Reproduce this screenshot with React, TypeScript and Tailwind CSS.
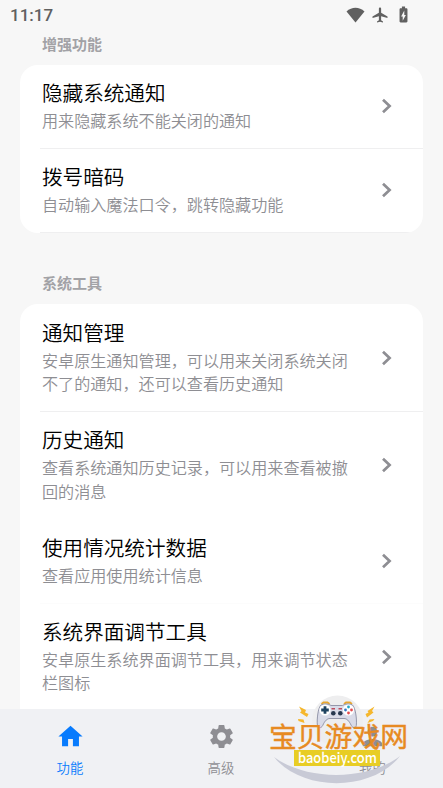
import { MdAirplanemodeActive, MdBatteryChargingFull, MdHome, MdSettings, MdPerson } from "react-icons/md";
import clsx from "clsx";

type Item = { title: string; desc: string; divider?: "normal" | "faint" };

const enhanced: Item[] = [
  { title: "隐藏系统通知", desc: "用来隐藏系统不能关闭的通知", divider: "normal" },
  { title: "拨号暗码", desc: "自动输入魔法口令，跳转隐藏功能", divider: "normal" },
];

const systemTools: Item[] = [
  { title: "通知管理", desc: "安卓原生通知管理，可以用来关闭系统关闭不了的通知，还可以查看历史通知", divider: "normal" },
  { title: "历史通知", desc: "查看系统通知历史记录，可以用来查看被撤回的消息" },
  { title: "使用情况统计数据", desc: "查看应用使用统计信息", divider: "faint" },
  { title: "系统界面调节工具", desc: "安卓原生系统界面调节工具，用来调节状态栏图标" },
];

function StatusBar() {
  return (
    <header className="flex h-[30px] shrink-0 items-center justify-between pl-[10px] pr-[30px] text-[#606060]">
      <span className="font-[Roboto] text-[17px] font-medium leading-[30px]">11:17</span>
      <div className="flex items-center pb-px">
        <svg className="h-[16px] w-[19px]" viewBox="0 0 19 16" fill="currentColor">
          <path d="M.5 4.6C5.8-.4 13.2-.4 18.500 4.600L9.500 15.500Z" />
        </svg>
        <MdAirplanemodeActive className="ml-[6px] size-[18px]" />
        <MdBatteryChargingFull className="ml-[5px] size-[19px]" />
      </div>
    </header>
  );
}

function Chevron() {
  return (
    <svg className="mr-[31px] mt-[2.8px] h-[16px] w-[11px] shrink-0" viewBox="0 0 11 16" fill="none" stroke="#8e8e93" strokeWidth="2.7">
      <path d="M2 1.700 8.600 8 2 14.300" />
    </svg>
  );
}

function Row({ title, desc, divider }: Item) {
  return (
    <div className="pl-5">
      <div
        className={clsx(
          "flex items-center justify-between border-b pb-[15.4px] pl-[2px] pt-3",
          divider === "normal" && "border-[#efeff0]",
          divider === "faint" && "border-[#fcfcfc]",
          !divider && "border-transparent"
        )}
      >
        <div className="w-[312px]">
          <h3 className="mb-[1.2px] text-[20.6px] font-[350] leading-[31px] text-black">{title}</h3>
          <p className="text-[16.1px] font-[350] leading-[23.4px] text-[#8e8e93]">{desc}</p>
        </div>
        <Chevron />
      </div>
    </div>
  );
}

function Section({ label, items, className }: { label: string; items: Item[]; className?: string }) {
  return (
    <section className="shrink-0">
      <h2 className="mb-[10px] ml-[42px] text-[15px] font-bold leading-[22px] text-[#a2a2a6]">{label}</h2>
      <div className={clsx("mx-5 overflow-hidden rounded-[18px] bg-white", className)}>
        {items.map((item) => (
          <Row key={item.title} {...item} />
        ))}
      </div>
    </section>
  );
}

const tabs = [
  { label: "功能", Icon: MdHome, active: true },
  { label: "高级", Icon: MdSettings, active: false },
  { label: "我的", Icon: MdPerson, active: false },
];

function TabBar() {
  return (
    <nav className="relative grid h-[79px] shrink-0 grid-cols-[140px_162px_141px] bg-[#f0f1f4]">
      {tabs.map(({ label, Icon, active }) => (
        <div key={label} className={clsx("flex flex-col items-center pt-[13px]", active ? "text-[#087bfd]" : "text-[#8e8e93]")}>
          <Icon className="size-[29px]" />
          <span className="mt-[6px] text-[13.4px] font-[350] leading-5">{label}</span>
        </div>
      ))}
      <Watermark />
    </nav>
  );
}

function Watermark() {
  return (
    <svg className="absolute -top-[17px] left-[264px] h-[96px] w-[150px]" viewBox="264 692 150 96">
      <circle cx="337.500" cy="721" r="25.500" fill="#eeeeef" />
      {/* swoosh under the name */}
      <path d="M274 757C306 781 368 781 400 756C372 792 302 792 274 757Z" fill="#c8cad6" />
      {/* gamepad */}
      <path d="M321.500 704l2-1.500h4l2 1.500M344 704l2-1.500h4l2 1.500" fill="none" stroke="#e9a62d" strokeWidth="1.800" />
      <path
        d="M321 705c2-1.500 8-1.500 10 .5h11.500c2-2 8-2 10-.5 3 3 4.500 14 3.800 20.500-.5 3-3.500 3-5 0-2.500-5-4.500-7-7.300-7h-14c-2.800 0-5 2-7.300 7-1.500 3-5 3-5.300 0-.7-6.500.6-17.500 3.600-20.500Z"
        fill="#d9dbe8"
        stroke="#8a8da3"
        strokeWidth=".9"
      />
      <circle cx="325" cy="710" r="5.600" fill="#fff" />
      <circle cx="348.500" cy="710" r="5.600" fill="#fff" />
      <path d="M325 706.200v7.600M321.200 710h7.600" stroke="#1e4260" strokeWidth="2.800" />
      <circle cx="348.500" cy="707" r="1.400" fill="#23a6c5" />
      <circle cx="348.500" cy="713" r="1.400" fill="#e34b4d" />
      <circle cx="345.500" cy="710" r="1.400" fill="#3577c2" />
      <circle cx="351.500" cy="710" r="1.400" fill="#e34b4d" />
      <path d="M331.500 708.800h3.500M338.500 708.800h3.500" stroke="#be4c5c" strokeWidth="1.500" />
      <circle cx="333.300" cy="713.300" r="2.300" fill="#27384f" />
      <circle cx="340.300" cy="713.300" r="2.300" fill="#27384f" />
      {/* sparks on both sides */}
      <path d="M299 706.500l7 3.500-1 2.500 3.500 1.500-1.500 3-7-4.500 1.500-1.500ZM298 719l5.500 .5 1 3.500-6-2Z" fill="#f5b72d" />
      <path d="M374.500 706.500l-7 4.500 1 1.500-3 1.500 1.500 3.500 6.500-5-1.500-1.500ZM374.500 719l-5 .5-2 3.500 5.500-2Z" fill="#f5b72d" />
      <text x="269" y="747" textLength="139" fontSize="27.800" fill="#e78a22" stroke="#e78a22" strokeWidth=".4">
        宝贝游戏网
      </text>
      <rect x="294" y="750" width="86" height="16" fill="#e8cd25" />
      <text x="298" y="763" textLength="79" lengthAdjust="spacingAndGlyphs" fontSize="14.500" fontWeight="500" fill="#fff">
        baobeiy.com
      </text>
    </svg>
  );
}

export default function App() {
  return (
    <div className="flex h-[788px] w-[443px] flex-col overflow-hidden bg-[#f7f7f7] font-['Noto_Sans_CJK_SC',sans-serif]">
      <StatusBar />
      <main className="flex min-h-0 flex-1 flex-col gap-[39.3px] overflow-hidden pt-[3px]">
        <Section label="增强功能" items={enhanced} />
        <Section label="系统工具" items={systemTools} className="pb-6 pt-[0.6px]" />
      </main>
      <TabBar />
    </div>
  );
}
